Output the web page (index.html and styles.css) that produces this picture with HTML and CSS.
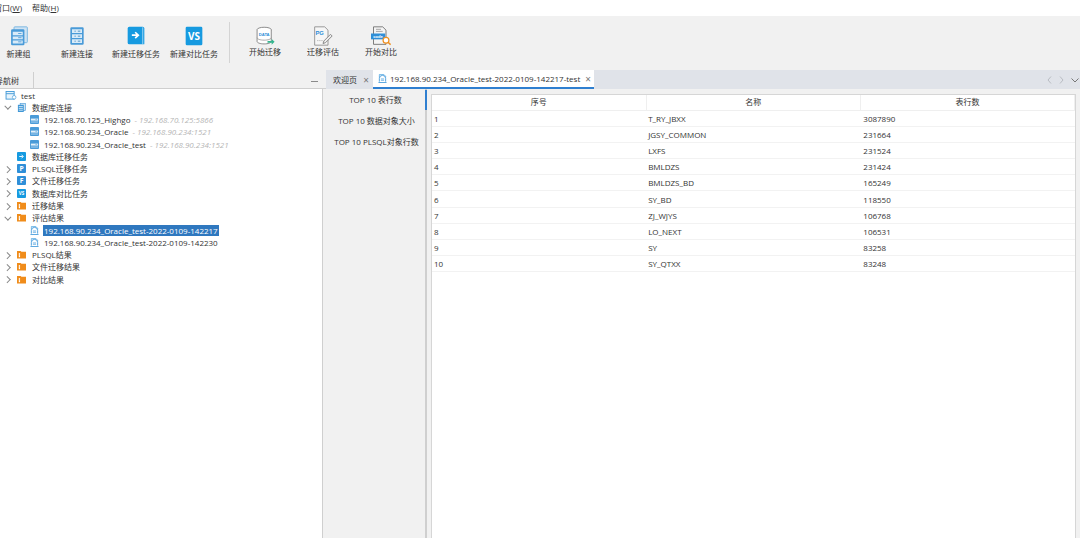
FILE: index.html
```html
<!DOCTYPE html>
<html lang="zh">
<head>
<meta charset="utf-8">
<title>迁移工具</title>
<link rel="stylesheet" href="styles.css">
</head>
<body>
<svg class="defs" width="0" height="0">
  <symbol id="i-folder" viewBox="0 0 10 10"><path d="M0 1h4l1 1h5v7.500H0z" fill="#f08c1a"/><path d="M2 3.500h1.400v4.500H2z" fill="#fff"/><path d="M2 5.500h1" stroke="#f08c1a" stroke-width=".5"/></symbol>
  <symbol id="i-server" viewBox="0 0 10 10"><rect width="10" height="10" rx="1" fill="#4a9bd8"/><path d="M1 4h8v2.200H1z" fill="#e4f1fa"/><path d="M1 7.400h8v.8H1z" fill="#cfe6f7"/><path d="M6 5h2" stroke="#4a9bd8" stroke-width=".6"/></symbol>
  <symbol id="i-result" viewBox="0 0 10 10"><path d="M1.500 4V.5h5l2 2V4" fill="none" stroke="#4aa3e0" stroke-width=".8"/><path d="M.5 9.500h9" stroke="#2f8fd8" stroke-width=".9"/><path d="M1.500 8.500V5a3.500 3.500 0 0 1 7 0v3.500" fill="#fff" stroke="#2f8fd8" stroke-width=".9"/><path d="M3.200 5.500h3.600M3.200 7h3.600" stroke="#2f8fd8" stroke-width=".7"/></symbol>
</svg>

<header class="menubar">
  <span class="menu menu-clip">窗口(<u>W</u>)</span>
  <span class="menu">帮助(<u>H</u>)</span>
</header>

<section class="toolbar">
  <div class="tool tool-group">
    <svg class="tool-icon" viewBox="0 0 22 24"><rect x="5" y="1" width="16" height="19" rx="1" fill="#cfe3f3" stroke="#6cb0e0"/><rect x="1.500" y="4" width="16" height="19" rx="1.500" fill="#4a9bd8"/><path d="M3.500 7h12v4h-12zM3.500 12.500h12v3.500h-12zM3.500 17.500h12v3.500h-12z" fill="#d9ebf8"/><path d="M10 9h4M10 14h4M10 19h4" stroke="#4a9bd8"/></svg>
    <span>新建组</span>
  </div>
  <div class="tool tool-conn">
    <svg class="tool-icon" viewBox="0 0 22 24"><rect x="3" y="1.500" width="16" height="21" rx="1.500" fill="#4a9bd8"/><path d="M5 4h12v4.500H5zM5 10h12v4.500H5zM5 16h12v4.500H5z" fill="#d9ebf8"/><path d="M8 6.200h1.500M12 6.200h3M8 12.200h1.500M12 12.200h3M8 18.200h1.500M12 18.200h3" stroke="#3a85bf"/></svg>
    <span>新建连接</span>
  </div>
  <div class="tool tool-migrate">
    <svg class="tool-icon" viewBox="0 0 22 24"><path d="M1 3a2 2 0 0 1 2-2h16a2 2 0 0 1 2 2v19H3a2 2 0 0 1-2-2z" fill="#169ae0"/><path d="M19 1.500v20" stroke="#7fc7ef" stroke-width="1.500"/><path d="M6 11h7M10 7.500l3.800 3.500-3.800 3.500" fill="none" stroke="#fff" stroke-width="2"/></svg>
    <span>新建迁移任务</span>
  </div>
  <div class="tool tool-compare">
    <svg class="tool-icon" viewBox="0 0 22 24"><rect x="1" y="1" width="20" height="22" rx="1.500" fill="#169ae0"/><text class="vs" x="11" y="17" text-anchor="middle">VS</text></svg>
    <span>新建对比任务</span>
  </div>
  <div class="tool-sep"></div>
  <div class="tool tool-start tool-low">
    <svg class="tool-icon" viewBox="0 0 24 24"><ellipse cx="11" cy="4.500" rx="8.500" ry="3" fill="#fff" stroke="#777"/><path d="M2.500 4.500v14c0 1.700 3.800 3 8.500 3s8.500-1.300 8.500-3v-14" fill="#fff" stroke="#777"/><path d="M2.500 14c0 1.700 3.800 3 8.500 3s8.500-1.300 8.500-3" fill="none" stroke="#999"/><text class="mini mini-blue" x="11" y="12" text-anchor="middle">DATA</text><path d="M15 18h5v-2.500l3.500 3.500-3.500 3.500V20h-5z" fill="#35b58f"/></svg>
    <span>开始迁移</span>
  </div>
  <div class="tool tool-assess tool-low">
    <svg class="tool-icon" viewBox="0 0 24 24"><path d="M2 1h12l4 4v18H2z" fill="#f6f6f6" stroke="#888"/><text class="mini mini-pg" x="8" y="11" text-anchor="middle">PG</text><path d="M5 17.500h7" stroke="#aaa" stroke-dasharray="1.500 1"/><path d="M13 18l8-8 2 2-8 8-3 1z" fill="#eee" stroke="#777"/></svg>
    <span>迁移评估</span>
  </div>
  <div class="tool tool-diff tool-low">
    <svg class="tool-icon" viewBox="0 0 24 24"><path d="M3 1h11l4 4v17H3z" fill="#f4f4f4" stroke="#666"/><path d="M6 4h6M6 6.500h8" stroke="#999"/><rect x="0" y="9" width="17" height="7" fill="#2f8fd8"/><text class="mini mini-white" x="8.500" y="14.500" text-anchor="middle">code</text><circle cx="18" cy="17" r="3.500" fill="#fff" stroke="#f09020" stroke-width="1.500"/><path d="M20.500 19.500l3 3" stroke="#f09020" stroke-width="1.800"/></svg>
    <span>开始对比</span>
  </div>
</section>

<main class="workspace">
  <aside class="left">
    <div class="left-head">
      <div class="left-tab"><span class="left-tab-text">导航树</span></div>
      <span class="minimize"></span>
    </div>
    <ul class="tree">
      <li class="row"><svg class="ic root-ic" viewBox="0 0 12 10"><rect x=".5" y=".5" width="9" height="8.500" fill="#e8f4fc" stroke="#3f97d6"/><path d="M.5 3h9" stroke="#3f97d6"/><circle cx="9.500" cy="7" r="2" fill="#fff" stroke="#3f97d6" stroke-width=".7"/></svg><span class="t-root">test</span></li>
      <li class="row l1"><span class="arrow open"></span><svg class="ic" viewBox="0 0 10 10"><rect x="3.500" y=".5" width="6" height="8" fill="#cfe3f3" stroke="#4a9bd8" stroke-width=".7"/><rect x="1" y="2" width="6.500" height="8" fill="#3f97d6"/><path d="M2 4h4.500M2 6h4.500M2 8h4.500" stroke="#fff" stroke-width=".8"/></svg><span>数据库连接</span></li>
      <li class="row l2"><svg class="ic" viewBox="0 0 10 10"><use href="#i-server"/></svg><span>192.168.70.125_Highgo</span><span class="addr">- 192.168.70.125:5866</span></li>
      <li class="row l2"><svg class="ic" viewBox="0 0 10 10"><use href="#i-server"/></svg><span>192.168.90.234_Oracle</span><span class="addr">- 192.168.90.234:1521</span></li>
      <li class="row l2"><svg class="ic" viewBox="0 0 10 10"><use href="#i-server"/></svg><span>192.168.90.234_Oracle_test</span><span class="addr">- 192.168.90.234:1521</span></li>
      <li class="row l1"><span class="arrow none"></span><svg class="ic" viewBox="0 0 10 10"><rect width="10" height="10" rx="1" fill="#169ae0"/><path d="M2.500 5h4M5 3l2 2-2 2" fill="none" stroke="#fff"/></svg><span>数据库迁移任务</span></li>
      <li class="row l1"><span class="arrow"></span><svg class="ic" viewBox="0 0 10 10"><rect width="10" height="10" rx="1" fill="#2f8fd8"/><text class="ic-letter" x="5" y="7.800" text-anchor="middle">P</text></svg><span>PLSQL迁移任务</span></li>
      <li class="row l1"><span class="arrow"></span><svg class="ic" viewBox="0 0 10 10"><rect width="10" height="10" rx="1" fill="#2f8fd8"/><text class="ic-letter" x="5" y="7.800" text-anchor="middle">F</text></svg><span>文件迁移任务</span></li>
      <li class="row l1"><span class="arrow"></span><svg class="ic" viewBox="0 0 10 10"><rect width="10" height="10" rx="1" fill="#169ae0"/><text class="ic-letter ic-vs" x="5" y="7" text-anchor="middle">VS</text></svg><span>数据库对比任务</span></li>
      <li class="row l1"><span class="arrow"></span><svg class="ic" viewBox="0 0 10 10"><use href="#i-folder"/></svg><span>迁移结果</span></li>
      <li class="row l1"><span class="arrow open"></span><svg class="ic" viewBox="0 0 10 10"><use href="#i-folder"/></svg><span>评估结果</span></li>
      <li class="row l2"><svg class="ic" viewBox="0 0 10 10"><use href="#i-result"/></svg><span class="selected">192.168.90.234_Oracle_test-2022-0109-142217</span></li>
      <li class="row l2"><svg class="ic" viewBox="0 0 10 10"><use href="#i-result"/></svg><span>192.168.90.234_Oracle_test-2022-0109-142230</span></li>
      <li class="row l1"><span class="arrow"></span><svg class="ic" viewBox="0 0 10 10"><use href="#i-folder"/></svg><span>PLSQL结果</span></li>
      <li class="row l1"><span class="arrow"></span><svg class="ic" viewBox="0 0 10 10"><use href="#i-folder"/></svg><span>文件迁移结果</span></li>
      <li class="row l1"><span class="arrow"></span><svg class="ic" viewBox="0 0 10 10"><use href="#i-folder"/></svg><span>对比结果</span></li>
    </ul>
  </aside>

  <section class="right">
    <div class="tabs">
      <div class="tab tab-welcome"><span>欢迎页</span><span class="close">×</span></div>
      <div class="tab tab-active"><svg class="ic" viewBox="0 0 10 10"><use href="#i-result"/></svg><span>192.168.90.234_Oracle_test-2022-0109-142217-test</span><span class="close">×</span></div>
      <div class="tab-nav">
        <svg viewBox="0 0 32 8" class="nav-svg"><path d="M4 .5L1 4l3 3.500M13 .5L16 4l-3 3.500" fill="none" stroke="#b9bcc2"/><path d="M24.500 2.500L28 6l3.500-3.500" fill="none" stroke="#777"/></svg>
      </div>
    </div>
    <div class="content">
      <nav class="side">
        <div class="side-item side-active">TOP 10 表行数</div>
        <div class="side-item">TOP 10 数据对象大小</div>
        <div class="side-item">TOP 10 PLSQL对象行数</div>
      </nav>
      <div class="grid-wrap">
        <table class="grid">
          <thead><tr><th>序号</th><th>名称</th><th>表行数</th></tr></thead>
          <tbody>
            <tr><td>1</td><td>T_RY_JBXX</td><td>3087890</td></tr>
            <tr><td>2</td><td>JGSY_COMMON</td><td>231664</td></tr>
            <tr><td>3</td><td>LXFS</td><td>231524</td></tr>
            <tr><td>4</td><td>BMLDZS</td><td>231424</td></tr>
            <tr><td>5</td><td>BMLDZS_BD</td><td>165249</td></tr>
            <tr><td>6</td><td>SY_BD</td><td>118550</td></tr>
            <tr><td>7</td><td>ZJ_WJYS</td><td>106768</td></tr>
            <tr><td>8</td><td>LO_NEXT</td><td>106531</td></tr>
            <tr><td>9</td><td>SY</td><td>83258</td></tr>
            <tr><td>10</td><td>SY_QTXX</td><td>83248</td></tr>
          </tbody>
        </table>
      </div>
    </div>
  </section>
</main>
</body>
</html>
```

FILE: styles.css
```css
* { box-sizing: border-box; }
html, body { margin: 0; height: 100%; }
body {
  width: 1080px;
  height: 538px;
  overflow: hidden;
  background: #fff;
  color: #333;
  font-family: "Open Sans", "Noto Sans CJK SC", sans-serif;
  font-size: 8px;
  display: flex;
  flex-direction: column;
}
.defs { position: absolute; }

.menubar {
  height: 16px;
  flex: none;
  display: flex;
  align-items: center;
  gap: 10px;
  overflow: hidden;
  padding-bottom: 2px;
  background: #fff;
}
.menu-clip { margin-left: -6px; }

.toolbar {
  height: 54px;
  flex: none;
  display: flex;
  background: #f1f1f1;
}
.tool {
  flex: none;
  width: 60px;
  display: flex;
  flex-direction: column;
  align-items: center;
  justify-content: flex-start;
  padding-top: 10px;
  white-space: nowrap;
}
.tool span { margin-top: 2px; line-height: 12px; }
.tool-icon { width: 20px; height: 20px; display: block; }
.tool-group { width: 37px; }
.tool-conn { margin-left: 10px; }
.tool-migrate { margin-left: -1px; }
.tool-compare { margin-left: -2px; }
.tool-sep {
  width: 1px;
  height: 41px;
  margin: 6px 0 0 5px;
  background: #d4d4d4;
}
.tool-low span { margin-top: 0; }
.tool-start { margin-left: 5px; }
.tool-assess { margin-left: -2px; }
.tool-diff { margin-left: -2px; }
.vs { font: bold 12px "Open Sans", sans-serif; fill: #fff; }
.mini { font: bold 5px "Liberation Sans", sans-serif; }
.mini-blue { fill: #2f8fd8; }
.mini-pg { fill: #2f8fd8; font-size: 7px; }
.mini-white { fill: #fff; }
.ic-letter { font: bold 7.500px "Open Sans", sans-serif; fill: #fff; }
.ic-vs { font-size: 5px; }

.workspace { flex: 1; display: flex; min-height: 0; }

.left {
  width: 326px;
  flex: none;
  display: flex;
  flex-direction: column;
  background: #f1f1f1;
}
.left-head {
  height: 19px;
  flex: none;
  display: flex;
  justify-content: space-between;
  align-items: stretch;
  border-bottom: 1px solid #cfcfcf;
}
.left-tab {
  width: 34px;
  border-right: 1px solid #cfcfcf;
  margin-top: 2px;
  overflow: hidden;
  white-space: nowrap;
  display: flex;
  align-items: center;
}
.left-tab-text { margin-left: -5px; }
.minimize {
  width: 7px;
  height: 1px;
  margin: 11px 8px 0 0;
  background: #8a8a8a;
}

.tree {
  flex: 1;
  list-style: none;
  margin: 0 3px 0 0;
  padding: 0;
  background: #fff;
  border-right: 1px solid #cfcfcf;
}
.row {
  height: 12.27px;
  display: flex;
  align-items: center;
  white-space: nowrap;
}
.l1 { padding-left: 5px; }
.l2 { padding-left: 30px; }
.ic { width: 9px; height: 9px; flex: none; margin-right: 5px; }
.l1 .ic { margin-right: 6px; }
.root-ic { width: 12px; margin-left: 5px; margin-right: 4px; }
.row > .arrow { width: 6px; height: 6px; flex: none; margin-right: 6px; position: relative; }
.row > .arrow.none { visibility: hidden; }
.l1 > .arrow::before {
  content: "";
  position: absolute;
  left: 0;
  top: 1px;
  width: 3.500px;
  height: 3.500px;
  border-top: 1px solid #888;
  border-right: 1px solid #888;
  transform: rotate(45deg);
}
.l1 > .arrow.open::before { transform: rotate(135deg); left: 1px; top: 0; }
.addr { margin-left: 4px; color: #b5b5b5; font-style: italic; }
.selected {
  background: #2f78bf;
  color: #fff;
  margin-left: -1px;
  padding: 0 1px;
  line-height: 11px;
}

.right { flex: 1; display: flex; flex-direction: column; min-width: 0; background: #f1f1f1; }
.tabs {
  height: 19px;
  flex: none;
  display: flex;
  background: #e0e3e9;
}
.tab { display: flex; align-items: center; white-space: nowrap; }
.tab-welcome { width: 47px; padding-left: 7px; justify-content: space-between; padding-right: 4px; }
.tab-active {
  background: #fff;
  width: 221px;
  padding-left: 5px;
  border-bottom: 2px solid #2f7fd0;
}
.tab-active .ic { margin-right: 3px; }
.tab-active .close { margin-left: 5px; }
.close { color: #777; font-size: 10px; line-height: 1; }
.tab-nav { margin-left: auto; display: flex; align-items: center; padding-right: 1px; }
.nav-svg { width: 32px; height: 8px; display: block; }

.content { flex: 1; display: flex; min-height: 0; }
.side {
  width: 101px;
  flex: none;
  padding-top: 1px;
  background: #f1f1f1;
  border-right: 2px solid #cfcfcf;
}
.side-item {
  height: 21px;
  padding-bottom: 2px;
  display: flex;
  align-items: center;
  justify-content: center;
  white-space: nowrap;
  margin-right: -2px;
}
.side-active { height: 20px; margin-bottom: 1px; border-right: 2px solid #2f7fd0; }
.grid-wrap {
  flex: 1;
  min-width: 0;
  margin: 5px 4px 0 4px;
  background: #fff;
  border-top: 1px solid #d6d6d6;
  border-left: 1px solid #d6d6d6;
  border-right: 1px solid #d6d6d6;
}
.grid { width: 100%; border-collapse: collapse; table-layout: fixed; }
.grid th {
  height: 15px;
  font-weight: 400;
  padding: 0 0 1px;
  border-right: 1px solid #efefef;
  border-bottom: 1px solid #efefef;
}
.grid td {
  height: 16.200px;
  padding: 0 0 0 2px;
  border-bottom: 1px solid #f2f2f2;
}
.grid td:nth-child(3) { padding-left: 3px; }
```
